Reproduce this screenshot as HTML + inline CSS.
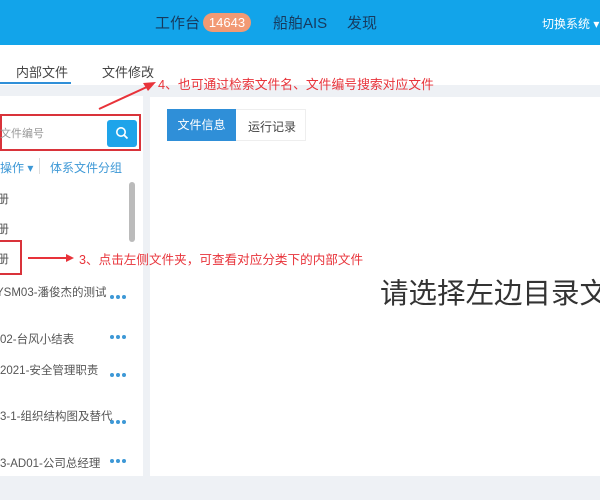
<!DOCTYPE html><html><head><meta charset="utf-8"><style>
*{margin:0;padding:0;box-sizing:border-box}
body{width:600px;height:500px;overflow:hidden;background:#eef1f5;font-family:"Liberation Sans","Noto Sans CJK SC",sans-serif;position:relative}
.a{position:absolute;white-space:nowrap}
.d{position:absolute;width:16px;height:4px;display:flex;justify-content:space-between}
.d i{width:4px;height:4px;border-radius:2px;background:#3d98d6;display:block}
.l{position:absolute;font-size:11.5px;color:#555;white-space:nowrap}
.clip{position:absolute;left:0;top:0;width:143px;height:500px;overflow:hidden}
</style></head><body>
<div class="a" style="left:0;top:0;width:600px;height:45px;background:#12a4ea"></div>
<div class="a" style="left:155px;top:12px;font-size:15px;color:#173a5e">工作台</div>
<div class="a" style="left:203px;top:13px;width:48px;height:19px;border-radius:10px;background:#f29a74;color:#fff;font-size:13px;text-align:center;line-height:19px">14643</div>
<div class="a" style="left:273px;top:12px;font-size:15px;color:#173a5e">船舶AIS</div>
<div class="a" style="left:347px;top:12px;font-size:15px;color:#173a5e">发现</div>
<div class="a" style="left:542px;top:15px;font-size:12px;color:#fff">切换系统 ▾</div>
<div class="a" style="left:0;top:45px;width:600px;height:40px;background:#fff"></div>
<div class="a" style="left:16px;top:62px;font-size:13px;color:#444">内部文件</div>
<div class="a" style="left:0;top:82px;width:71px;height:2px;background:#2f8fd8"></div>
<div class="a" style="left:102px;top:62px;font-size:13px;color:#444">文件修改</div>
<div class="a" style="left:0;top:96px;width:143px;height:380px;background:#fff"></div>
<div class="a" style="left:150px;top:97px;width:450px;height:379px;background:#fff"></div>
<div class="a" style="left:0;top:114px;width:141px;height:37px;border:2px solid #d9333a"></div>
<div class="a" style="left:0;top:125px;font-size:11px;color:#999">文件编号</div>
<div class="a" style="left:107px;top:120px;width:30px;height:27px;background:#1ea4ea;border-radius:3px"></div>
<svg class="a" style="left:115px;top:126px" width="14" height="14"><circle cx="6" cy="6" r="4.2" fill="none" stroke="#fff" stroke-width="1.6"/><line x1="9" y1="9" x2="12.5" y2="12.5" stroke="#fff" stroke-width="1.8"/></svg>
<div class="a" style="left:0;top:159px;font-size:12px;color:#3d98d6">操作 ▾</div>
<div class="a" style="left:39px;top:158px;width:1px;height:16px;background:#ddd"></div>
<div class="a" style="left:50px;top:159px;font-size:12px;color:#3d98d6">体系文件分组</div>
<div class="a" style="left:129px;top:182px;width:6px;height:60px;background:#bbb;border-radius:3px"></div>
<div class="clip">
<div class="l" style="left:-3px;top:190px;font-size:12px">册</div>
<div class="l" style="left:-3px;top:220px;font-size:12px">册</div>
<div class="l" style="left:-3px;top:250px;font-size:12px">册</div>
<div class="l" style="left:-4px;top:284px">YSM03-潘俊杰的测试</div>
<div class="l" style="left:0;top:331px">02-台风小结表</div>
<div class="l" style="left:0;top:362px">2021-安全管理职责</div>
<div class="l" style="left:0;top:408px">3-1-组织结构图及替代</div>
<div class="l" style="left:0;top:455px">3-AD01-公司总经理</div>
</div>
<div class="a" style="left:0;top:240px;width:22px;height:35px;border:2px solid #d9333a;border-left:none"></div>
<div class="a" style="left:28px;top:257px;width:42px;height:2px;background:#e8333a"></div>
<div class="a" style="left:66px;top:254px;width:0;height:0;border-left:8px solid #e8333a;border-top:4px solid transparent;border-bottom:4px solid transparent"></div>
<div class="a" style="left:79px;top:249px;font-size:12.6px;color:#e8333a">3、点击左侧文件夹，可查看对应分类下的内部文件</div>
<div class="d" style="left:110px;top:295px"><i></i><i></i><i></i></div>
<div class="d" style="left:110px;top:335px"><i></i><i></i><i></i></div>
<div class="d" style="left:110px;top:373px"><i></i><i></i><i></i></div>
<div class="d" style="left:110px;top:420px"><i></i><i></i><i></i></div>
<div class="d" style="left:110px;top:459px"><i></i><i></i><i></i></div>
<svg class="a" style="left:95px;top:78px" width="65" height="35"><line x1="4" y1="31" x2="54" y2="8" stroke="#e8333a" stroke-width="2"/><polygon points="61,4 48,5 53,13" fill="#e8333a"/></svg>
<div class="a" style="left:158px;top:74px;font-size:12.8px;color:#e8333a">4、也可通过检索文件名、文件编号搜索对应文件</div>
<div class="a" style="left:167px;top:109px;width:139px;height:32px;border:1px solid #eee"></div>
<div class="a" style="left:167px;top:109px;width:69px;height:32px;background:#2f8fd8;color:#fff;font-size:12px;text-align:center;line-height:32px">文件信息</div>
<div class="a" style="left:248px;top:118px;font-size:12px;color:#444">运行记录</div>
<div class="a" style="left:380px;top:271px;font-size:28.5px;color:#333;width:220px;overflow:hidden">请选择左边目录文件</div>
</body></html>
